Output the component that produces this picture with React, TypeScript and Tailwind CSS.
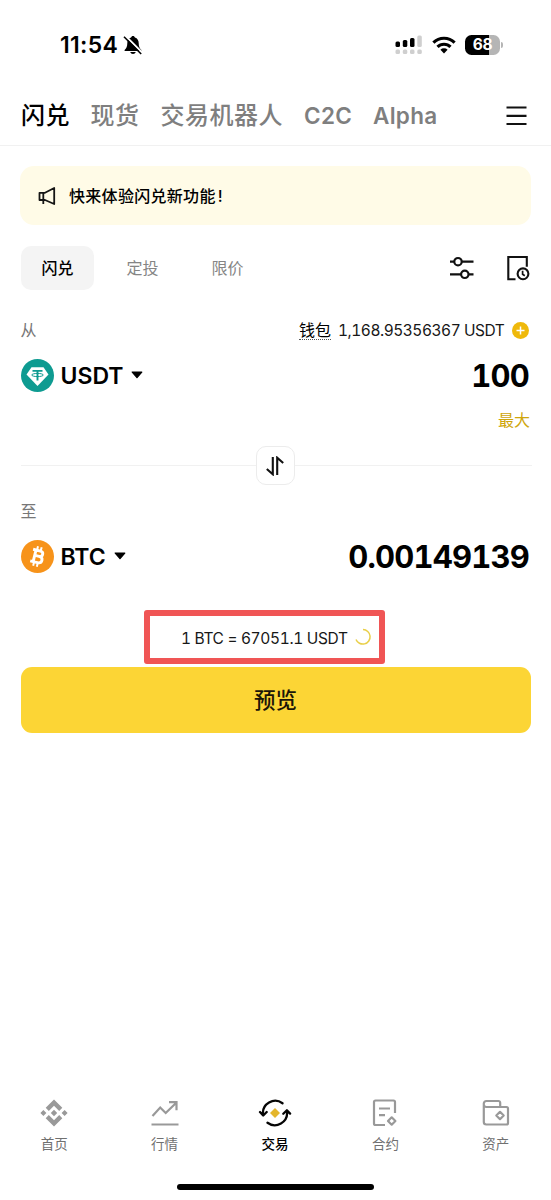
import type { ReactNode } from "react"

const topTabs = [
  { label: "闪兑", width: "w-[69.500px]" },
  { label: "现货", width: "w-[70px]" },
  { label: "交易机器人", width: "w-[143.500px]" },
  { label: "C2C", width: "w-[69px]" },
  { label: "Alpha", width: "w-[70px]" },
]

const modes = ["闪兑", "定投", "限价"]

function StatusBar() {
  return (
    <header className="flex h-[85px] items-start justify-between pl-[60px] pr-[48px] pt-[32px]">
      <div className="flex h-[26px] items-center gap-[5px]">
        <span className="text-[23px] font-semibold leading-none tracking-[0.300px]">11:54</span>
        <svg width="20" height="20" viewBox="0 0 20 20">
          <path
            d="M10 1c1 0 1.7.6 1.9 1.5 2.6.8 3.8 3 3.8 5.7 0 3.400 1 5 2.700 6.700v1H1.600v-1C3.300 13.200 4.300 11.600 4.300 8.200c0-2.700 1.200-4.900 3.800-5.700C8.300 1.600 9 1 10 1zM7.200 17h5.600c-.5 1.300-1.500 2-2.800 2s-2.300-.7-2.800-2z"
            fill="#000"
          />
          <path d="M2.600 1l16 16" stroke="#fff" strokeWidth="1.800" />
          <path d="M1 1.800l17.200 17.200" stroke="#000" strokeWidth="1.600" />
        </svg>
      </div>
      <div className="flex h-[26px] items-center">
        <svg width="28" height="20" viewBox="0 0 28 20">
          <g fill="#000">
            <rect x="0.500" y="6.500" width="4.500" height="5.500" rx="1.500" />
            <rect x="7.800" y="5" width="4.500" height="7" rx="1.500" />
            <rect x="15" y="3" width="4.500" height="9" rx="1.500" />
          </g>
          <g fill="#cfcfcf">
            <rect x="22.300" y="0.500" width="4.500" height="11.500" rx="1.500" />
            <rect x="0.500" y="14.500" width="4.500" height="4.500" rx="1.500" />
            <rect x="7.800" y="14.500" width="4.500" height="4.500" rx="1.500" />
            <rect x="15" y="14.500" width="4.500" height="4.500" rx="1.500" />
            <rect x="22.300" y="14.500" width="4.500" height="4.500" rx="1.500" />
          </g>
        </svg>
        <svg className="ml-[9px]" width="24" height="18" viewBox="0 0 24 18">
          <g fill="none" stroke="#000" strokeWidth="3.100">
            <path d="M1.400 6.600a15 15 0 0 1 21.200 0" />
            <path d="M5.500 10.900a9.200 9.200 0 0 1 13 0" />
          </g>
          <path d="M12 17.500l-3.600-3.700a5.200 5.200 0 0 1 7.200 0z" fill="#000" />
        </svg>
        <div className="ml-[9px] flex h-[20px] w-[35px] items-center justify-center rounded-[6.500px] bg-[linear-gradient(90deg,#000_68%,#b5b5b5_68%)] text-[15.500px] font-bold leading-none tracking-[-0.300px] text-white">
          68
        </div>
        <div className="ml-px h-[6px] w-[2px] rounded-r bg-[#b5b5b5]" />
      </div>
    </header>
  )
}

function TopTabs() {
  return (
    <nav className="flex h-[61px] items-center border-b border-[#f1f1f1] pl-[21px] pt-[2px] text-[24px] font-medium">
      {topTabs.map((tab, i) => (
        <span
          key={tab.label}
          className={`${tab.width} shrink-0 whitespace-nowrap ${i === 0 ? "text-black" : "text-[#7f7f7f]"} ${i > 2 ? "text-[22.500px] font-semibold tracking-[0.300px]" : "tracking-[0.500px]"}`}
        >
          {tab.label}
        </span>
      ))}
      <svg className="ml-[62.500px]" width="21" height="20" viewBox="0 0 21 20">
        <path d="M0.500 1.500h20M0.500 9.800h20M0.500 18h20" stroke="#111" strokeWidth="2.200" />
      </svg>
    </nav>
  )
}

function Banner() {
  return (
    <div className="mx-5 mt-5 flex h-[59px] items-center rounded-[14px] bg-[#fffbe7] pl-[18px]">
      <svg width="18" height="20" viewBox="0 0 18 20" fill="none" stroke="#151515" strokeWidth="1.800" strokeLinejoin="round">
        <path d="M16.200 2v16L7 14H1.500V6.800H7z" />
        <path d="M5.300 6.800V14v4" />
      </svg>
      <span className="ml-[13px] text-[16px] font-medium leading-none tracking-[0.300px]">
        快来体验闪兑新功能<span className="ml-[2px]">!</span>
      </span>
    </div>
  )
}

function ModeTabs() {
  return (
    <div className="mt-[21px] flex h-[44px] items-center pl-[21px]">
      {modes.map((mode, i) => (
        <span
          key={mode}
          className={
            i === 0
              ? "flex h-full w-[73px] items-center justify-center rounded-[10px] bg-[#f4f4f4] text-[16px] font-medium"
              : "w-[85px] text-center text-[16px] text-[#858585] [&:nth-child(2)]:ml-[6px]"
          }
        >
          {mode}
        </span>
      ))}
      <svg className="ml-[179px]" width="26" height="24" viewBox="0 0 26 24" fill="none" stroke="#111" strokeWidth="2.200">
        <path d="M1 5.700h4.500M12.500 5.700H24.500M1 18.300h11.500M19.500 18.300H24.500" />
        <circle cx="9" cy="5.700" r="3.700" />
        <circle cx="15.800" cy="18.300" r="3.700" />
      </svg>
      <svg className="ml-[30.500px]" width="24" height="26" viewBox="0 0 24 26" fill="none" stroke="#111" strokeWidth="2.100">
        <path d="M9.500 24.300H2.300V2H20.800v9.800" />
        <circle cx="17" cy="18.800" r="5.400" />
        <path d="M16.600 15.800v3.400l2.200 1.600" strokeWidth="1.700" />
      </svg>
    </div>
  )
}

function Caret() {
  return (
    <svg className="ml-[8px]" width="12" height="8" viewBox="0 0 12 8">
      <path d="M1.200 1h9.600L6 6.700z" fill="#000" stroke="#000" strokeWidth="1.200" strokeLinejoin="round" />
    </svg>
  )
}

function UsdtLogo() {
  return (
    <svg width="33" height="33" viewBox="0 0 33 33">
      <circle cx="16.500" cy="16.500" r="16.500" fill="#0e9b91" />
      <path d="M10.500 8.300h12l5 7.200-11 11.500-11-11.500z" fill="#fff" />
      <g fill="none" stroke="#0e9b91">
        <path d="M11.500 11.900h10M16.500 11.900v9.600" strokeWidth="1.900" />
        <ellipse cx="16.500" cy="16" rx="5.800" ry="1.600" strokeWidth="1" />
      </g>
    </svg>
  )
}

function BtcLogo() {
  return (
    <svg width="33" height="33" viewBox="0 0 33 33">
      <circle cx="16.500" cy="16.500" r="16.500" fill="#f7931a" />
      <g transform="rotate(14 16.500 16.500)" fill="none" stroke="#fff">
        <path d="M10.500 10.500h7.500c4 0 4 5.500 0 5.500h-5M18 16c5 0 5 6.500 0 6.500h-7.500M13.500 10.500v12" strokeWidth="2.900" />
        <path d="M14.500 6.500v4M18.300 6.500v4M14.500 22.500v4M18.300 22.500v4" strokeWidth="2" />
      </g>
    </svg>
  )
}

function AssetRow({ logo, symbol, amount }: { logo: ReactNode; symbol: string; amount: string }) {
  return (
    <div className="flex h-[36px] items-center">
      {logo}
      <span className="ml-[7px] pt-[2px] text-[23px] font-semibold leading-none">{symbol}</span>
      <Caret />
      <span className="ml-auto text-[31px] font-bold leading-none tracking-[-0.800px] tabular-nums">{amount}</span>
    </div>
  )
}

function Convert() {
  return (
    <main className="pl-[20.500px] pr-[22px]">
      <div className="mt-[28px] flex h-6 items-center text-[16px] leading-none">
        <span className="text-[#777]">从</span>
        <span className="ml-auto mt-[2px] border-b border-dotted border-[#555] pb-[1px]">钱包</span>
        <span className="ml-[7px] w-[166px] whitespace-nowrap pt-px text-[15.500px] tracking-[-0.480px] text-[#181818] tabular-nums">
          1,168.95356367 USDT
        </span>
        <svg className="ml-[8px]" width="17" height="17" viewBox="0 0 17 17">
          <circle cx="8.500" cy="8.500" r="8.500" fill="#efb90b" />
          <path d="M8.500 4.500v8M4.500 8.500h8" stroke="#fff" strokeWidth="1.500" />
        </svg>
      </div>
      <div className="mt-[15px]">
        <AssetRow logo={<UsdtLogo />} symbol="USDT" amount="100" />
      </div>
      <div className="mt-[15px] flex h-6 items-center justify-end text-[16px] text-[#cfa60c]">
        <span className="-mr-px">最大</span>
      </div>

      <div className="-mr-[3px] mt-[14px] flex h-[39px] items-center">
        <div className="h-px w-[235px] bg-[#f1f1f1]" />
        <div className="flex h-[39px] w-[39px] items-center justify-center rounded-[10px] border border-[#ececec]">
          <svg width="18" height="20" viewBox="0 0 18 20" fill="none" stroke="#111" strokeWidth="2.100">
            <path d="M0.800 13l6 5.300V1M17.200 7l-6-5.300V19" />
          </svg>
        </div>
        <div className="h-px flex-1 bg-[#f1f1f1]" />
      </div>

      <div className="mt-[14px] flex h-6 items-center text-[16px] text-[#777]">至</div>
      <div className="mt-[15px]">
        <AssetRow logo={<BtcLogo />} symbol="BTC" amount="0.00149139" />
      </div>
    </main>
  )
}

function Quote() {
  return (
    <div className="ml-[144px] mt-[36px] flex h-[54px] w-[241px] items-center rounded-[3px] border-6 border-[#f05555] pl-[31px]">
      <span className="w-[168px] whitespace-nowrap pt-[3px] text-[15.500px] tracking-[-0.350px] text-[#181818] tabular-nums">
        1 BTC = 67051.1 USDT
      </span>
      <svg className="ml-[5px]" width="18" height="18" viewBox="0 0 18 18" fill="none">
        <path d="M9 1.500a7.300 7.300 0 1 1-7 10" stroke="#e9cf48" strokeWidth="1.500" />
      </svg>
    </div>
  )
}

const homeIcon = (
  <svg width="28" height="28" viewBox="0 0 28 28" fill="#999">
    <path d="M14 .5l8.300 8.300-3.100 3.100L14 6.700l-5.200 5.200-3.100-3.100zM14 27.500l-8.300-8.300 3.100-3.100 5.200 5.200 5.200-5.200 3.100 3.100zM3.400 11l3 3-3 3-3-3zM24.600 11l3 3-3 3-3-3zM14 10.800l3.200 3.200-3.200 3.200-3.200-3.200z" />
  </svg>
)

const marketIcon = (
  <svg width="28" height="28" viewBox="0 0 28 28" fill="none" stroke="#999" strokeWidth="2.200">
    <path d="M1.500 17l7.700-8.500 5.500 5.500L25 4M18 3.200h7.500v8M.5 25.500h27" />
  </svg>
)

const tradeIcon = (
  <svg width="34" height="28" viewBox="0 0 34 28" fill="none" stroke="#050505" strokeWidth="2.300" strokeLinecap="round" strokeLinejoin="round">
    <path d="M24.500 4.200A12.300 12.300 0 0 0 5 15.500M2 13l3.200 3.500L8.700 13" />
    <path d="M9.500 23.800A12.300 12.300 0 0 0 29 12.500M25.300 14.700l3.600-3.500 3.200 3.400" />
    <path d="M17 9l5 5-5 5-5-5z" fill="#e4b62c" stroke="none" />
  </svg>
)

const futuresIcon = (
  <svg width="26" height="28" viewBox="0 0 26 28" fill="none" stroke="#999" strokeWidth="2.200" strokeLinejoin="round">
    <path d="M13 26H3.500a1.500 1.500 0 0 1-1.500-1.500V3a1.500 1.500 0 0 1 1.500-1.500H21.500A1.500 1.500 0 0 1 23 3v11M7 9.500h11M7 16.200h6" />
    <path d="M19.700 18.300l3.700 3.700-3.700 3.700-3.700-3.700z" />
  </svg>
)

const assetsIcon = (
  <svg width="28" height="28" viewBox="0 0 28 28" fill="none" stroke="#999" strokeWidth="2.200" strokeLinejoin="round">
    <path d="M1.800 8V4.500A2.500 2.500 0 0 1 4.300 2H16.500A1.700 1.700 0 0 1 18.200 3.700V8M1.800 5.500A2.500 2.500 0 0 0 4.300 8H24.500a1.500 1.500 0 0 1 1.500 1.500V24a1.500 1.500 0 0 1-1.500 1.500H4.300a2.500 2.500 0 0 1-2.500-2.500z" />
    <path d="M18 12.800l3.700 3.700-3.700 3.700-3.700-3.700z" />
  </svg>
)

const navItems = [
  { label: "首页", icon: homeIcon },
  { label: "行情", icon: marketIcon },
  { label: "交易", icon: tradeIcon, active: true },
  { label: "合约", icon: futuresIcon },
  { label: "资产", icon: assetsIcon },
]

function BottomNav() {
  return (
    <footer className="mt-auto">
      <nav className="-ml-px mr-0 grid h-[85.500px] grid-cols-5">
        {navItems.map((item) => (
          <div key={item.label} className="flex flex-col items-center">
            {item.icon}
            <span className={`mt-[9.500px] text-[13.500px] leading-[16px] ${item.active ? "font-medium text-black" : "text-[#707070]"}`}>
              {item.label}
            </span>
          </div>
        ))}
      </nav>
      <div className="mx-auto mb-[10px] h-[6px] w-[197px] rounded-full bg-black" />
    </footer>
  )
}

export default function App() {
  return (
    <div className="flex h-[1200px] w-[551px] flex-col overflow-hidden bg-white font-[Inter,'Noto_Sans_CJK_SC',sans-serif] text-black">
      <StatusBar />
      <TopTabs />
      <Banner />
      <ModeTabs />
      <Convert />
      <Quote />
      <button className="mx-[20.500px] mt-[3px] h-[66px] shrink-0 rounded-[11px] bg-[#fcd535] text-[21.500px] font-medium text-[#1b1508]">预览</button>
      <BottomNav />
    </div>
  )
}
